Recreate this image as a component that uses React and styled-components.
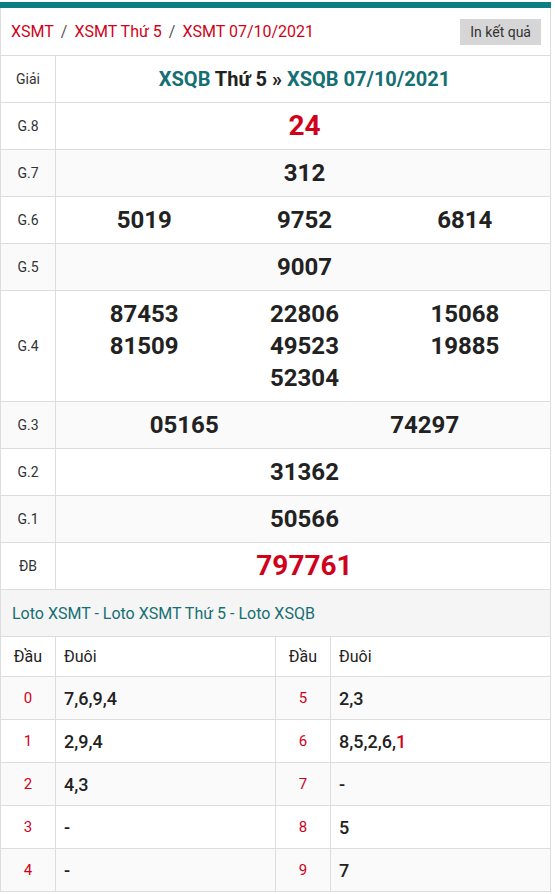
import React from "react";
import styled, { createGlobalStyle } from "styled-components";

const GlobalStyle = createGlobalStyle`
  html, body { margin: 0; padding: 0; background: #fff; }
  body { font-family: Roboto, "Noto Sans", Arial, sans-serif; color: #222; }
  * { box-sizing: border-box; }
`;

const RED = "#d0021b";
const TEAL = "#0a7e80";
const LINK = "#156f73";
const LINE = "#dddddd";

const Page = styled.div`
  width: 551px;
  padding-top: 2px;
`;

const TopBar = styled.div`
  height: 6px;
  background: ${TEAL};
`;

const Box = styled.div`
  border-left: 1px solid ${LINE};
  border-right: 1px solid ${LINE};
`;

const Header = styled.div`
  display: flex;
  align-items: center;
  justify-content: space-between;
  height: 48px;
  padding: 0 9px 0 10px;
  border-bottom: 1px solid ${LINE};
`;

const Crumbs = styled.nav`
  display: flex;
  align-items: center;
  font-size: 16px;
  gap: 7px;
`;

const Crumb = styled.a`
  color: ${RED};
  text-decoration: none;
`;

const Slash = styled.span`
  color: #555;
`;

const PrintButton = styled.button`
  height: 26px;
  border: none;
  background: #d6d6d6;
  color: #333;
  font-family: inherit;
  font-size: 14px;
  padding: 0 10px;
  white-space: nowrap;
  cursor: pointer;
`;

const Row = styled.div`
  display: grid;
  grid-template-columns: 55px 1fr;
  border-bottom: 1px solid ${LINE};
  background: ${(p) => (p.$alt ? "#fafafa" : "#fff")};
`;

const Label = styled.div`
  display: flex;
  align-items: center;
  justify-content: center;
  border-right: 1px solid ${LINE};
  font-size: 14px;
  color: #333;
`;

const Values = styled.div`
  display: grid;
  grid-template-columns: repeat(${(p) => p.$cols}, 1fr);
  padding: 7px 5px 7px 8px;
  line-height: 32px;
  text-align: center;
`;

const Title = styled.div`
  padding: 7px 5px 7px 8px;
  line-height: 32px;
  text-align: center;
  font-size: 20px;
  font-weight: 700;
  color: #222;
`;

const TitleLink = styled.a`
  color: ${LINK};
  text-decoration: none;
`;

const Num = styled.span`
  font-size: ${(p) => (p.$big ? "28px" : "24px")};
  font-weight: 700;
  color: ${(p) => (p.$red ? RED : "#222")};
  grid-column: ${(p) => p.$col || "auto"};
`;

const LotoTitle = styled.div`
  height: 47px;
  display: flex;
  align-items: center;
  padding-left: 11px;
  background: #f5f5f5;
  border-bottom: 1px solid ${LINE};
  font-size: 16px;
  color: ${LINK};
`;

const LotoRow = styled.div`
  display: grid;
  grid-template-columns: 55px 220px 55px 1fr;
  height: ${(p) => (p.$head ? "40px" : "43px")};
  border-bottom: 1px solid ${LINE};
  background: ${(p) => (p.$alt ? "#fafafa" : "#fff")};
`;

const Head = styled.div`
  display: flex;
  align-items: center;
  justify-content: ${(p) => (p.$center ? "center" : "flex-start")};
  padding-left: ${(p) => (p.$center ? "0" : "8px")};
  border-right: ${(p) => (p.$last ? "none" : `1px solid ${LINE}`)};
  font-size: 16px;
  color: #222;
`;

const Digit = styled.div`
  display: flex;
  align-items: center;
  justify-content: center;
  border-right: 1px solid ${LINE};
  font-size: 15px;
  color: ${RED};
`;

const Tails = styled.div`
  display: flex;
  align-items: center;
  padding-left: 8px;
  border-right: ${(p) => (p.$last ? "none" : `1px solid ${LINE}`)};
  font-size: 18px;
  font-weight: 500;
  color: #222;
`;

const Red = styled.span`
  color: ${RED};
`;

const prizes = [
  { label: "G.8", cols: 1, nums: ["24"], red: true, big: true },
  { label: "G.7", cols: 1, nums: ["312"] },
  { label: "G.6", cols: 3, nums: ["5019", "9752", "6814"] },
  { label: "G.5", cols: 1, nums: ["9007"] },
  {
    label: "G.4",
    cols: 3,
    nums: ["87453", "22806", "15068", "81509", "49523", "19885", "52304"],
  },
  { label: "G.3", cols: 2, nums: ["05165", "74297"] },
  { label: "G.2", cols: 1, nums: ["31362"] },
  { label: "G.1", cols: 1, nums: ["50566"] },
  { label: "ĐB", cols: 1, nums: ["797761"], red: true, big: true },
];

const loto = [
  ["0", "7,6,9,4", "5", "2,3"],
  ["1", "2,9,4", "6", "8,5,2,6,", true],
  ["2", "4,3", "7", "-"],
  ["3", "-", "8", "5"],
  ["4", "-", "9", "7"],
];

export default function App() {
  return (
    <Page>
      <GlobalStyle />
      <TopBar />
      <Box>
        <Header>
          <Crumbs>
            <Crumb href="#">XSMT</Crumb>
            <Slash>/</Slash>
            <Crumb href="#">XSMT Thứ 5</Crumb>
            <Slash>/</Slash>
            <Crumb href="#">XSMT 07/10/2021</Crumb>
          </Crumbs>
          <PrintButton>In kết quả</PrintButton>
        </Header>

        <Row>
          <Label>Giải</Label>
          <Title>
            <TitleLink href="#">XSQB</TitleLink> Thứ 5 »{" "}
            <TitleLink href="#">XSQB 07/10/2021</TitleLink>
          </Title>
        </Row>

        {prizes.map((p, i) => (
          <Row key={p.label} $alt={i % 2 === 1}>
            <Label>{p.label}</Label>
            <Values $cols={p.cols}>
              {p.nums.map((n, j) => (
                <Num
                  key={n}
                  $red={p.red}
                  $big={p.big}
                  $col={p.label === "G.4" && j === 6 ? 2 : undefined}
                >
                  {n}
                </Num>
              ))}
            </Values>
          </Row>
        ))}

        <LotoTitle>Loto XSMT - Loto XSMT Thứ 5 - Loto XSQB</LotoTitle>

        <LotoRow $head>
          <Head $center>Đầu</Head>
          <Head>Đuôi</Head>
          <Head $center>Đầu</Head>
          <Head $last>Đuôi</Head>
        </LotoRow>
        {loto.map((r, i) => (
          <LotoRow key={r[0]} $alt={i % 2 === 0}>
            <Digit>{r[0]}</Digit>
            <Tails>{r[1]}</Tails>
            <Digit>{r[2]}</Digit>
            <Tails $last>
              {r[3]}
              {r[4] && <Red>1</Red>}
            </Tails>
          </LotoRow>
        ))}
      </Box>
    </Page>
  );
}
